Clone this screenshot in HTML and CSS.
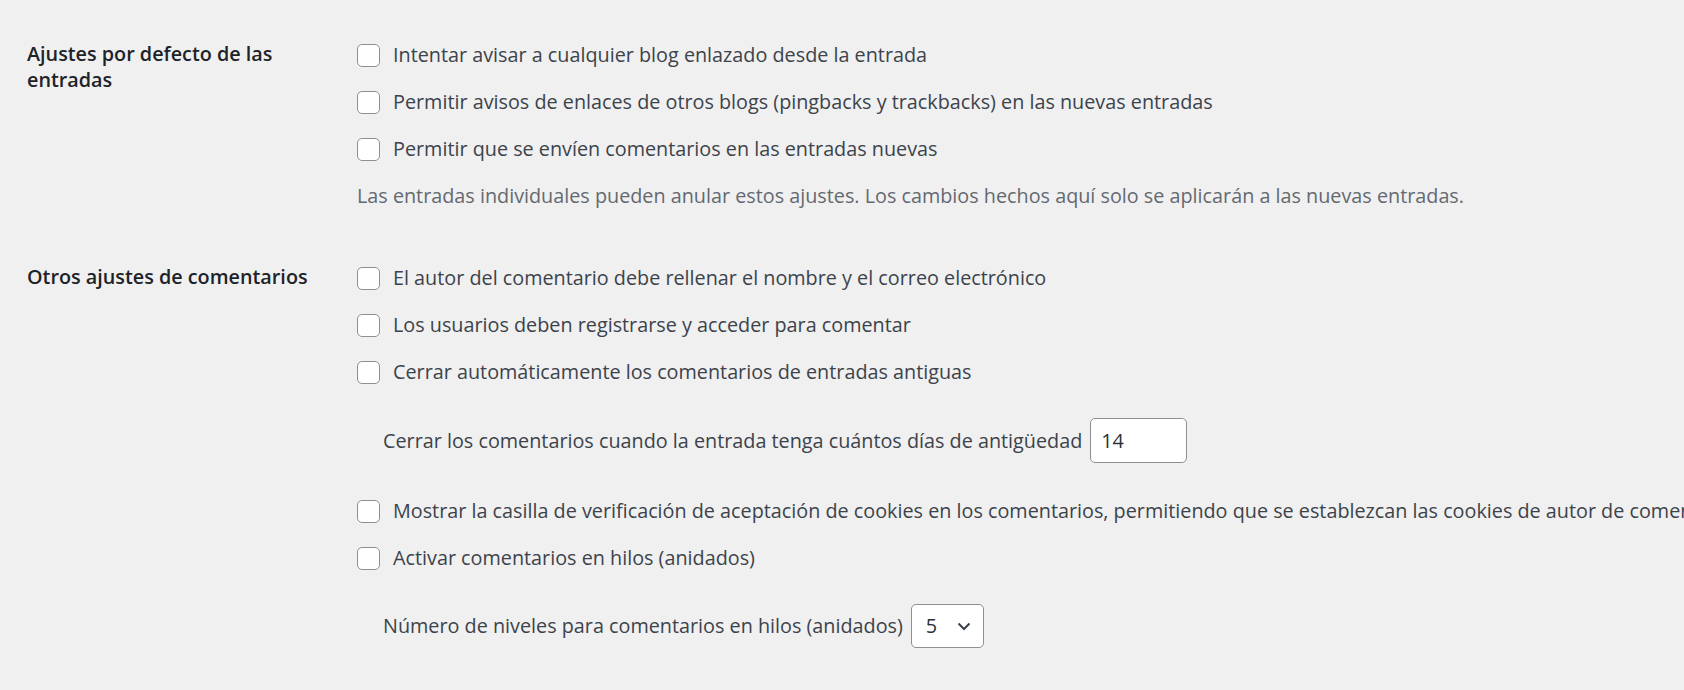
FILE: index.html
```html
<!DOCTYPE html>
<html lang="es">
<head>
    <meta charset="UTF-8">
    <meta name="viewport" content="width=device-width, initial-scale=1.0">
    <title>Ajustes de comentarios</title>
    <link rel="stylesheet" href="styles.css">
</head>
<body>
    <div class="form-table">
        <div class="row">
            <div class="row-label">Ajustes por defecto de las entradas</div>
            <div class="row-field">
                <label class="check"><input type="checkbox"> Intentar avisar a cualquier blog enlazado desde la entrada</label>
                <label class="check"><input type="checkbox"> Permitir avisos de enlaces de otros blogs (pingbacks y trackbacks) en las nuevas entradas</label>
                <label class="check"><input type="checkbox"> Permitir que se envíen comentarios en las entradas nuevas</label>
                <p class="description">Las entradas individuales pueden anular estos ajustes. Los cambios hechos aquí solo se aplicarán a las nuevas entradas.</p>
            </div>
        </div>

        <div class="row">
            <div class="row-label">Otros ajustes de comentarios</div>
            <div class="row-field">
                <label class="check"><input type="checkbox"> El autor del comentario debe rellenar el nombre y el correo electrónico</label>
                <label class="check"><input type="checkbox"> Los usuarios deben registrarse y acceder para comentar</label>
                <label class="check"><input type="checkbox"> Cerrar automáticamente los comentarios de entradas antiguas</label>
                <label class="sub-row">Cerrar los comentarios cuando la entrada tenga cuántos días de antigüedad
                    <input type="number" class="small-text" value="14">
                </label>
                <label class="check"><input type="checkbox"> Mostrar la casilla de verificación de aceptación de cookies en los comentarios, permitiendo que se establezcan las cookies de autor de comentarios.</label>
                <label class="check"><input type="checkbox"> Activar comentarios en hilos (anidados)</label>
                <label class="sub-row">Número de niveles para comentarios en hilos (anidados)
                    <span class="select-wrap">
                        <select class="levels">
                            <option>2</option>
                            <option>3</option>
                            <option>4</option>
                            <option selected>5</option>
                            <option>6</option>
                        </select>
                        <svg class="chevron" width="14" height="9" viewBox="0 0 14 9"><path d="M1.5 1.5 L7 7 L12.5 1.5" fill="none" stroke="#3c434a" stroke-width="2"/></svg>
                    </span>
                </label>
            </div>
        </div>
    </div>
</body>
</html>
```

FILE: styles.css
```css
html, body {
    overflow: hidden;
}

body {
    font-family: "Open Sans", Arial, sans-serif;
    font-size: 19.8px;
    line-height: 26px;
    background-color: #f0f0f1;
    color: #3c434a;
    margin: 0;
    padding: 42px 0 0 27px;
}

.form-table {
    display: flex;
    flex-direction: column;
    gap: 56px;
}

.row {
    display: grid;
    grid-template-columns: 330px 1fr;
}

.row-label {
    font-weight: 600;
    color: #1d2327;
    width: 292px;
    margin-top: -1px;
}

.row-field {
    display: flex;
    flex-direction: column;
    gap: 21px;
    min-width: 0;
}

.check {
    display: flex;
    align-items: center;
    gap: 13px;
    white-space: nowrap;
}

.check input {
    appearance: none;
    flex: none;
    width: 23px;
    height: 23px;
    margin: 0;
    background: #fff;
    border: 1px solid #8c8f94;
    border-radius: 5px;
}

.description {
    margin: 0;
    color: #646970;
}

.sub-row {
    display: flex;
    align-items: center;
    gap: 8px;
    padding-left: 26px;
    margin: 12px 0 14px;
    white-space: nowrap;
}

.small-text {
    appearance: textfield;
    width: 97px;
    height: 45px;
    box-sizing: border-box;
    margin: 0;
    padding: 0 10px;
    font: inherit;
    color: #2c3338;
    background: #fff;
    border: 1px solid #8c8f94;
    border-radius: 5px;
}

.select-wrap {
    position: relative;
    display: inline-flex;
}

.levels {
    appearance: none;
    width: 73px;
    height: 44px;
    margin: 0;
    padding: 0 0 0 14px;
    font: inherit;
    color: #2c3338;
    background: #fff;
    border: 1px solid #8c8f94;
    border-radius: 5px;
}

.chevron {
    position: absolute;
    right: 13px;
    top: 18px;
    pointer-events: none;
}
```
